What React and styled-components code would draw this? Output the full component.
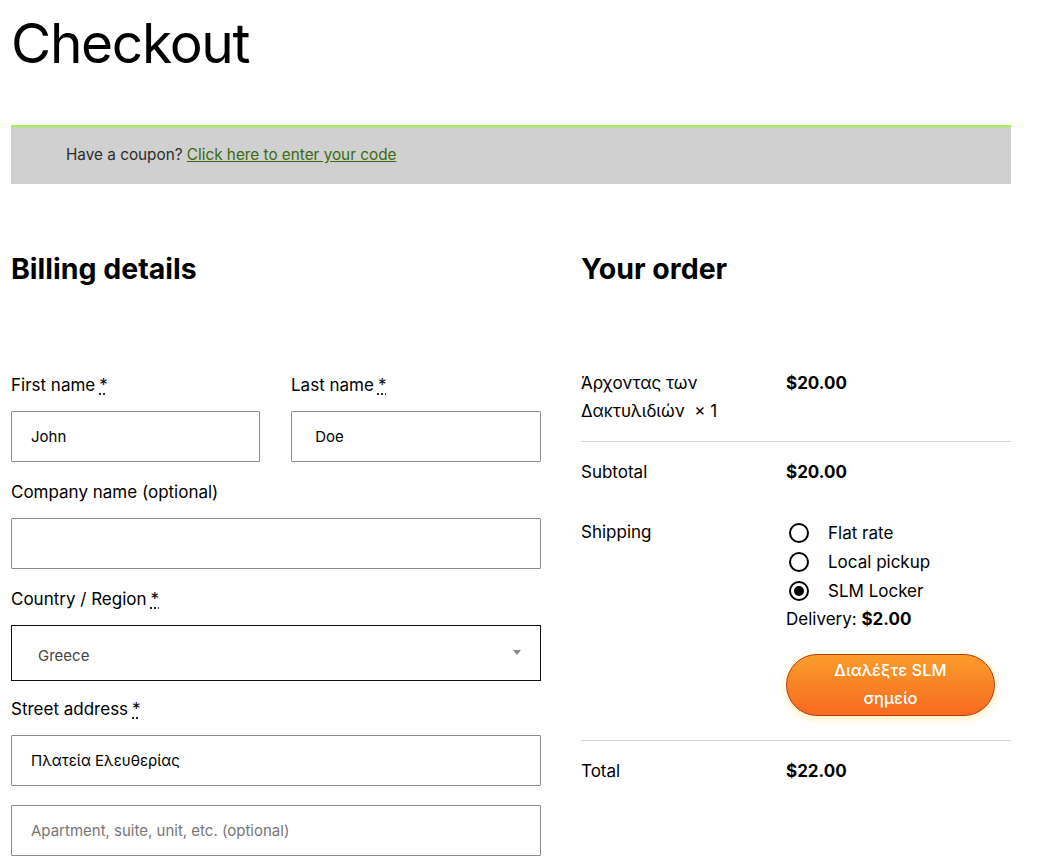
import React from 'react';
import styled, { createGlobalStyle } from 'styled-components';

const GlobalStyle = createGlobalStyle`
  body {
    margin: 0;
    background: #fff;
    font-family: Inter, "Noto Sans", "Liberation Sans", sans-serif;
    color: #000;
  }
`;

const Page = styled.div`
  width: 1000px;
  padding: 0 11px 40px;
`;

const Title = styled.h1`
  margin: 0;
  padding-top: 9px;
  font-size: 55px;
  font-weight: 400;
  line-height: 68px;
  letter-spacing: -1.3px;
`;

const CouponBar = styled.div`
  margin-top: 48px;
  border-top: 2px solid #a6f04a;
  background: #d0d0d0;
  padding: 16px 55px 17px;
  font-size: 15.3px;
  line-height: 24px;
  color: #2b2b2b;
`;

const CouponLink = styled.a`
  color: #3a6a0c;
  text-decoration: underline;
  cursor: pointer;
`;

const Columns = styled.div`
  display: grid;
  grid-template-columns: 530px 430px;
  column-gap: 40px;
  margin-top: 68px;
`;

const Heading = styled.h3`
  margin: 0 0 ${p => p.$gap}px;
  font-size: 28.5px;
  font-weight: 700;
  line-height: 34px;
  letter-spacing: 0;
`;

const FieldRow = styled.div`
  display: grid;
  grid-template-columns: 249px 250px;
  column-gap: 31px;
`;

const Field = styled.div`
  margin-bottom: ${p => p.$gap ?? 18}px;
`;

const Label = styled.label`
  display: block;
  font-size: 17px;
  line-height: 24px;
  margin-bottom: 14px;
`;

const Required = styled.abbr`
  text-decoration: underline dotted;
  text-underline-offset: 3px;
  margin-left: 4px;
`;

const Input = styled.input`
  box-sizing: border-box;
  display: block;
  width: 100%;
  height: 51px;
  padding: 0 19px;
  border: 1px solid #8d8d8d;
  border-radius: 1px;
  font-family: inherit;
  font-size: 15px;
  color: #000;
  background: #fff;
  outline: none;

  &::placeholder {
    color: #767676;
  }
`;

const SelectBox = styled.div`
  box-sizing: border-box;
  display: flex;
  align-items: center;
  justify-content: space-between;
  height: 56px;
  padding: 4px 19px 0 26px;
  border: 1px solid #111;
  font-size: 15px;
  color: #444;
`;

const Caret = styled.span`
  width: 0;
  height: 0;
  border-left: 4px solid transparent;
  border-right: 4px solid transparent;
  border-top: 5px solid #888;
  margin-bottom: 6px;
`;

const OrderRow = styled.div`
  display: grid;
  grid-template-columns: 205px 1fr;
  padding: 16px 0;
  font-size: 17px;
  line-height: 28px;
  border-top: ${p => (p.$divider ? '1px solid #d3d3d3' : 'none')};
`;

const Amount = styled.div`
  font-weight: 700;
`;

const RadioList = styled.ul`
  list-style: none;
  margin: 0;
  padding: 0;
`;

const RadioItem = styled.li`
  display: flex;
  align-items: center;
  height: 29px;
`;

const Radio = styled.span`
  box-sizing: border-box;
  width: 20px;
  height: 20px;
  margin: 0 19px 0 3px;
  border: 2px solid #000;
  border-radius: 50%;
  display: flex;
  align-items: center;
  justify-content: center;

  &::after {
    content: '';
    display: ${p => (p.$checked ? 'block' : 'none')};
    width: 10px;
    height: 10px;
    border-radius: 50%;
    background: #000;
  }
`;

const Delivery = styled.div`
  line-height: 29px;
`;

const SlmButton = styled.button`
  display: block;
  box-sizing: border-box;
  width: 209px;
  margin: 20px 0 8px;
  padding: 1px 40px 3px;
  border: 1px solid #b23a17;
  border-radius: 31px;
  background: linear-gradient(to bottom, #fa9d2b, #f76a20);
  box-shadow: 0 2px 8px rgba(255, 220, 90, 0.55);
  color: #fff;
  font-family: inherit;
  font-size: 16.5px;
  font-weight: 500;
  line-height: 28px;
  cursor: pointer;
`;

const shippingOptions = [
  { name: 'Flat rate', checked: false },
  { name: 'Local pickup', checked: false },
  { name: 'SLM Locker', checked: true },
];

const App = () => (
  <Page>
    <GlobalStyle />
    <Title>Checkout</Title>

    <CouponBar>
      Have a coupon? <CouponLink>Click here to enter your code</CouponLink>
    </CouponBar>

    <Columns>
      <div>
        <Heading $gap={87}>Billing details</Heading>

        <FieldRow>
          <Field>
            <Label>First name<Required title="required">*</Required></Label>
            <Input defaultValue="John" />
          </Field>
          <Field>
            <Label>Last name<Required title="required">*</Required></Label>
            <Input defaultValue=" Doe" />
          </Field>
        </FieldRow>

        <Field>
          <Label>Company name (optional)</Label>
          <Input />
        </Field>

        <Field $gap={16}>
          <Label>Country / Region<Required title="required">*</Required></Label>
          <SelectBox>
            <span>Greece</span>
            <Caret />
          </SelectBox>
        </Field>

        <Field $gap={19}>
          <Label>Street address<Required title="required">*</Required></Label>
          <Input defaultValue="Πλατεία Ελευθερίας" />
        </Field>

        <Input placeholder="Apartment, suite, unit, etc. (optional)" />
      </div>

      <div>
        <Heading $gap={67}>Your order</Heading>

        <OrderRow>
          <div>Άρχοντας των Δακτυλιδιών&nbsp; × 1</div>
          <Amount>$20.00</Amount>
        </OrderRow>

        <OrderRow $divider>
          <div>Subtotal</div>
          <Amount>$20.00</Amount>
        </OrderRow>

        <OrderRow>
          <div>Shipping</div>
          <div>
            <RadioList>
              {shippingOptions.map(opt => (
                <RadioItem key={opt.name}>
                  <Radio $checked={opt.checked} />
                  {opt.name}
                </RadioItem>
              ))}
            </RadioList>
            <Delivery>
              Delivery: <strong>$2.00</strong>
            </Delivery>
            <SlmButton>Διαλέξτε SLM σημείο</SlmButton>
          </div>
        </OrderRow>

        <OrderRow $divider>
          <div>Total</div>
          <Amount>$22.00</Amount>
        </OrderRow>
      </div>
    </Columns>
  </Page>
);

export default App;
